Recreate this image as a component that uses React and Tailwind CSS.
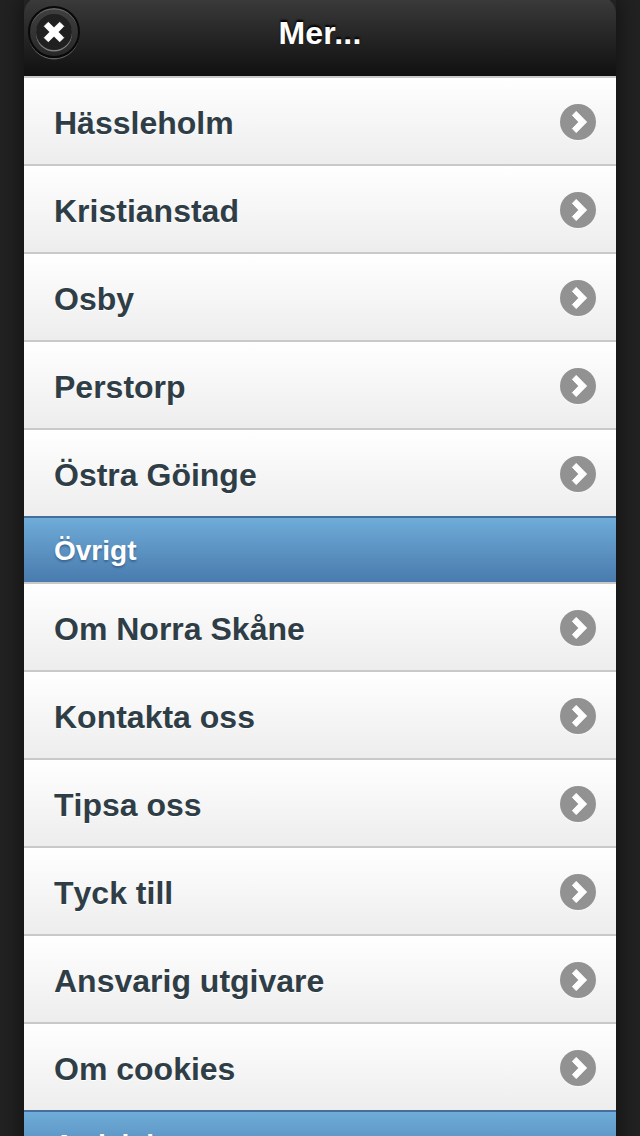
import React from "react";

const sections = [
  {
    items: ["Hässleholm", "Kristianstad", "Osby", "Perstorp", "Östra Göinge"],
  },
  {
    title: "Övrigt",
    items: [
      "Om Norra Skåne",
      "Kontakta oss",
      "Tipsa oss",
      "Tyck till",
      "Ansvarig utgivare",
      "Om cookies",
    ],
  },
  { title: "Avdelningar", items: [] },
];

const CloseIcon = () => (
  <svg viewBox="0 0 36 36" className="w-9 h-9">
    <path
      d="M12.3 8.2 L18 13.8 L23.7 8.2 L27.8 12.3 L22.2 18 L27.8 23.7 L23.7 27.8 L18 22.2 L12.3 27.8 L8.2 23.7 L13.8 18 L8.2 12.3 Z"
      fill="#fff"
      stroke="#fff"
      strokeWidth="0.8"
      strokeLinejoin="round"
    />
  </svg>
);

const ArrowIcon = () => (
  <svg viewBox="0 0 36 36" className="mt-0.5 w-9 h-9 shrink-0 drop-shadow-[0_1px_0_rgba(255,255,255,0.5)]">
    <circle cx="18" cy="18" r="18" fill="#929292" />
    <path
      d="M16.2 7.4 L26.6 18 L16.2 28.6 L12.4 24.6 L18.8 18 L12.4 11.4 Z"
      fill="#fff"
      stroke="#fff"
      strokeWidth="1"
      strokeLinejoin="round"
    />
  </svg>
);

const Header = () => (
  <header className="relative h-[76px] flex items-start justify-center rounded-t-[18px] bg-linear-to-b from-[#3c3c3c] to-[#111] -mt-1 pt-1 box-content">
    <button
      type="button"
      aria-label="Stäng"
      className="absolute left-1 top-[10px] w-[52px] h-[52px] rounded-full border-2 border-[#080808] bg-linear-to-b from-[#404040] to-[#282828] flex items-center justify-center shadow-[0_2px_0_-0.5px_rgba(255,255,255,0.3),inset_0_2px_0_-0.5px_rgba(255,255,255,0.2)]"
    >
      <span className="w-9 h-9 rounded-full bg-[#202020] flex items-center justify-center shadow-[0_1.5px_0_rgba(255,255,255,0.4)]">
        <CloseIcon />
      </span>
    </button>
    <h1 className="mt-[13px] text-[32px] leading-10 font-bold text-white tracking-[0.2px] [text-shadow:0_-2px_2px_#000]">
      Mer...
    </h1>
  </header>
);

const Divider = ({ title }) => (
  <h2 className="h-[66px] px-[30px] pt-0.5 flex items-center border-t-2 border-[#456f9a] bg-linear-to-b from-[#6facd8] to-[#497bae] text-[28px] font-bold text-white [text-shadow:0_2px_2px_#3e6790]">
    {title}
  </h2>
);

const Row = ({ label }) => (
  <li className="h-[88px] pl-[30px] pr-5 flex items-center justify-between border-t-2 border-[#c9c9c9] bg-linear-to-b from-white to-[#ededed]">
    <a
      href="#"
      className="mt-1 text-[32px] leading-10 font-bold text-[#2f3e46] [font-kerning:none] [text-shadow:0_1px_0_#fff]"
    >
      {label}
    </a>
    <ArrowIcon />
  </li>
);

const App = () => {
  return (
    <div className="h-[1136px] overflow-hidden px-6 bg-[#222] font-['Liberation_Sans',Arial,sans-serif]">
      <main className="min-h-full shadow-[0_0_24px_rgba(0,0,0,0.6)]">
        <Header />
        {sections.map((section, index) => (
          <section key={index}>
            {section.title && <Divider title={section.title} />}
            <ul>
              {section.items.map((item) => (
                <Row key={item} label={item} />
              ))}
            </ul>
          </section>
        ))}
      </main>
    </div>
  );
};

export default App;
